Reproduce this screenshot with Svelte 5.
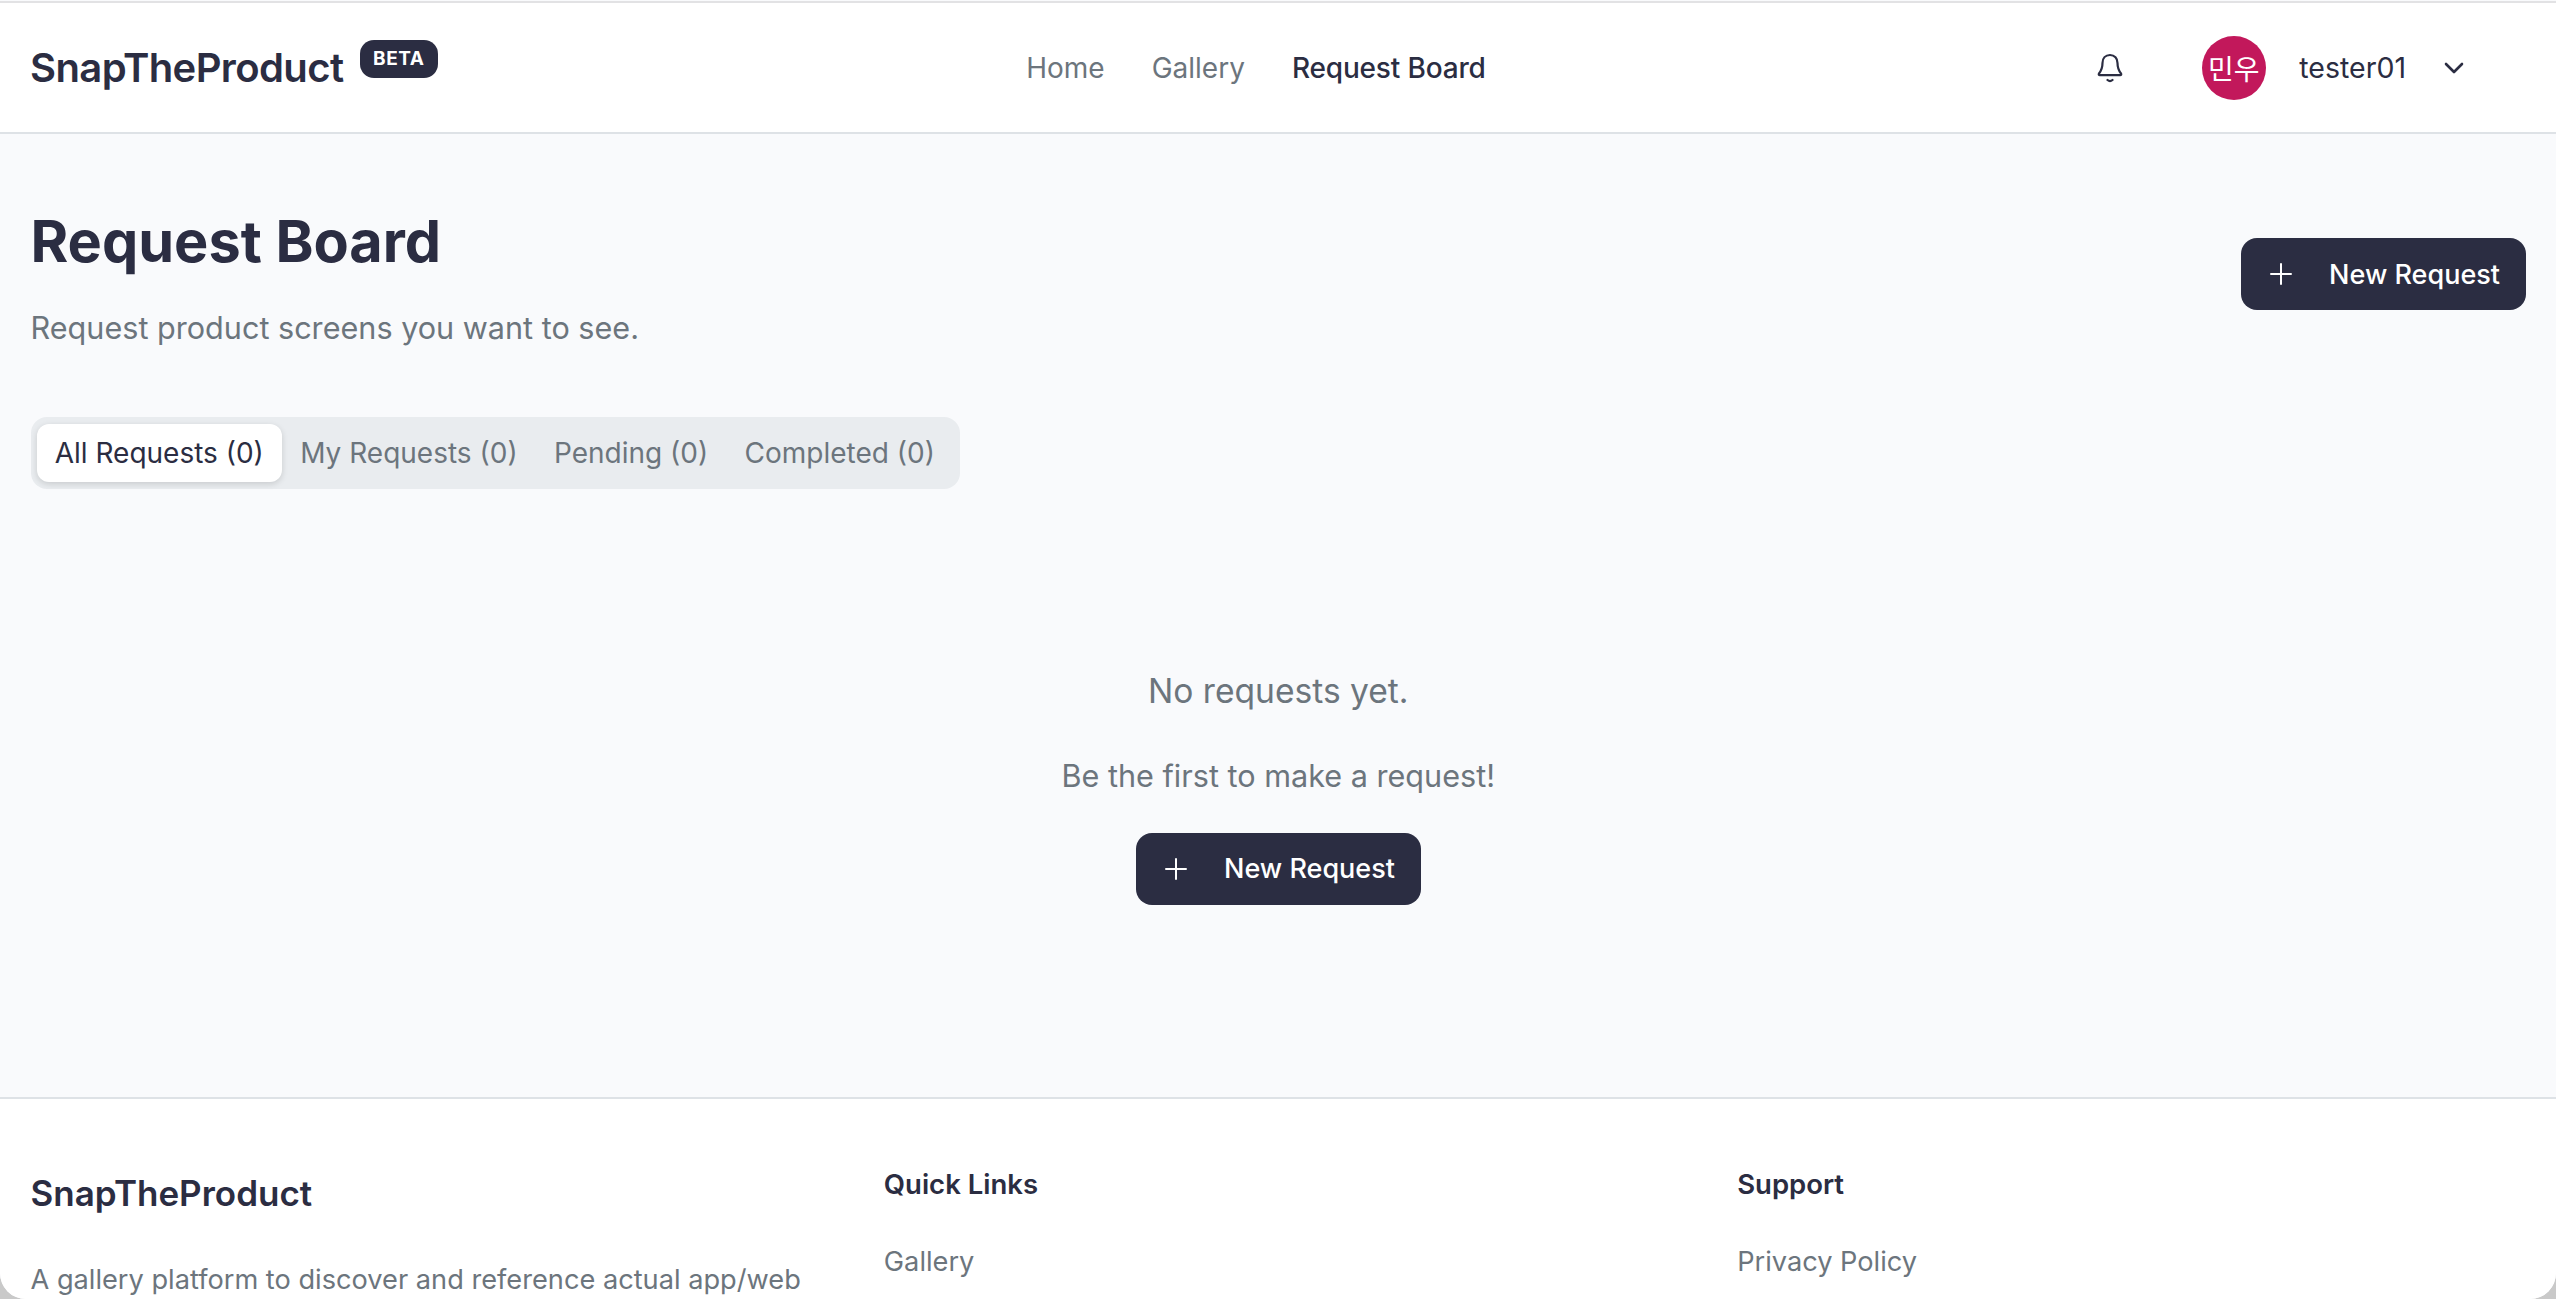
<script>
  const tabs = [
    { label: 'All Requests', count: 0 },
    { label: 'My Requests', count: 0 },
    { label: 'Pending', count: 0 },
    { label: 'Completed', count: 0 }
  ];
  const links = ['Home', 'Gallery', 'Request Board'];
  let active = $state('All Requests');
</script>

{#snippet newRequest()}
  <button type="button" class="btn">
    <svg class="plus" viewBox="0 0 22 22" width="22" height="22" aria-hidden="true">
      <path d="M11 1v20M1 11h20" fill="none" stroke="currentColor" stroke-width="2" stroke-linecap="round" />
    </svg>
    <span>New Request</span>
  </button>
{/snippet}

<div class="win">
  <header class="nav">
    <div class="brand">
      <span class="logo">SnapTheProduct</span>
      <span class="beta">BETA</span>
    </div>
    <nav class="links">
      {#each links as l}
        <a href="#top" class:on={l === 'Request Board'}>{l}</a>
      {/each}
    </nav>
    <div class="user">
      <svg class="bell" viewBox="0 0 28 30" width="28" height="30" aria-hidden="true">
        <path d="M14 2c-4.600 0-7.500 3.400-7.500 8 0 5.500-1.500 8-3.500 10.500-.6.8-.1 1.700.8 1.700h20.400c.9 0 1.400-.9.8-1.700-2-2.500-3.500-5-3.500-10.500 0-4.600-2.900-8-7.500-8z" fill="none" stroke="currentColor" stroke-width="2.200" stroke-linejoin="round" />
        <path d="M11.500 27c1.500 1.300 3.500 1.300 5 0" fill="none" stroke="currentColor" stroke-width="2.200" stroke-linecap="round" />
      </svg>
      <span class="avatar">민우</span>
      <span class="name">tester01</span>
      <svg class="chev" viewBox="0 0 20 12" width="20" height="12" aria-hidden="true">
        <path d="M2 2l8 8 8-8" fill="none" stroke="currentColor" stroke-width="2.600" stroke-linecap="round" stroke-linejoin="round" />
      </svg>
    </div>
  </header>

  <main class="main">
    <div class="head">
      <div>
        <h1>Request Board</h1>
        <p class="sub">Request product screens you want to see.</p>
      </div>
      {@render newRequest()}
    </div>

    <div class="tabs" role="tablist">
      {#each tabs as t}
        <button
          type="button"
          role="tab"
          class="tab"
          class:active={active === t.label}
          aria-selected={active === t.label}
          onclick={() => active = t.label}
        >{t.label} ({t.count})</button>
      {/each}
    </div>

    <section class="empty">
      <p class="e1">No requests yet.</p>
      <p class="e2">Be the first to make a request!</p>
      {@render newRequest()}
    </section>
  </main>

  <footer class="foot">
    <div class="col">
      <h2>SnapTheProduct</h2>
      <p class="about">A gallery platform to discover and reference actual app/web</p>
    </div>
    <div class="col">
      <h3>Quick Links</h3>
      <a href="#top">Gallery</a>
    </div>
    <div class="col">
      <h3>Support</h3>
      <a href="#top">Privacy Policy</a>
    </div>
  </footer>
</div>

<style>
  :global(body) {
    background: #c9c9c9;
    overflow: hidden;
  }
  .win {
    height: 1299px;
    overflow: hidden;
    display: flex;
    flex-direction: column;
    box-sizing: border-box;
    border-radius: 0 0 26px 26px;
    background: #f9fafc;
    color: #2b2d42;
    font-family: Inter, "Noto Sans CJK KR", sans-serif;
  }
  .nav {
    box-sizing: border-box;
    height: 133px;
    margin-top: 1px;
    flex: none;
    display: flex;
    justify-content: space-between;
    align-items: center;
    padding: 0 31px 0 30px;
    background: #fff;
    border-top: 2px solid #e2e2e4;
    border-bottom: 2px solid #dee2e6;
  }
  .brand { display: flex; align-items: flex-start; gap: 16.500px; }
  .logo { font-size: 40px; font-weight: 600; letter-spacing: -0.015em; line-height: 46px; }
  .beta {
    background: #2b2d42;
    color: #fff;
    font-size: 19px;
    font-weight: 700;
    letter-spacing: 0.03em;
    line-height: 38px;
    padding: 0 13px;
    border-radius: 14px;
    margin-top: -5px;
  }
  .links { display: flex; gap: 47px; font-size: 28px; }
  .links a { color: #6c757d; text-decoration: none; }
  .links a.on { color: #2b2d42; font-weight: 500; letter-spacing: -0.006em; }
  .user {
    display: flex;
    align-items: center;
    justify-content: flex-end;
    padding: 0 61px 0 21.500px;
  }
  .bell { margin-right: 78px; }
  .avatar {
    width: 64px;
    height: 64px;
    border-radius: 50%;
    background: #c2185b;
    color: #fff;
    font-size: 28px;
    display: flex;
    align-items: center;
    justify-content: center;
    margin-right: 33.500px;
  }
  .name { font-size: 28.500px; margin-right: 38px; }

  .main { flex: 1; padding: 0 30px 0 30.500px; }
  .head {
    display: flex;
    justify-content: space-between;
    align-items: flex-start;
    padding-top: 72.500px;
  }
  h1 { margin: 0; font-size: 57.600px; font-weight: 700; line-height: 68px; }
  .sub { margin: 33px 0 0; font-size: 30.600px; line-height: 40px; color: #6c757d; }
  .btn {
    display: inline-flex;
    align-items: center;
    height: 72px;
    padding: 0 26px 0 29.500px;
    border: 0;
    border-radius: 16px;
    background: #2b2d42;
    color: #fff;
    font-family: inherit;
    font-size: 27px;
    font-weight: 500;
    cursor: pointer;
  }
  .plus { margin-right: 37px; }
  .head .btn { margin-top: 31.500px; }
  .tabs {
    display: inline-flex;
    margin-top: 69px;
    padding: 7px 7px 7px 6px;
    border-radius: 16px;
    background: #e9ecef;
  }
  .tab {
    height: 58px;
    padding: 0 18.200px;
    border: 0;
    border-radius: 12px;
    background: transparent;
    color: #6c757d;
    font-family: inherit;
    font-size: 28px;
    cursor: pointer;
  }
  .tab.active {
    background: #fff;
    color: #2b2d42;
    box-shadow: 0 2px 6px rgba(0, 0, 0, 0.14);
  }
  .empty { text-align: center; padding-top: 181px; }
  .e1 { margin: 0; font-size: 33.600px; line-height: 42px; color: #6c757d; }
  .e2 { margin: 44px 0 0; font-size: 30.600px; line-height: 40px; color: #6c757d; }
  .empty .btn { margin-top: 37px; }

  .foot {
    flex: none;
    box-sizing: border-box;
    height: 202px;
    display: grid;
    grid-template-columns: repeat(3, 1fr);
    gap: 65.500px;
    padding: 68px 31px 0 30.500px;
    background: #fff;
    border-top: 2px solid #dee2e6;
  }
  .foot h2 { margin: 4px 0 0; font-size: 35px; font-weight: 600; line-height: 44px; }
  .about { margin: 44.500px 0 0; font-size: 27.200px; line-height: 40px; color: #6c757d; }
  .foot h3 { margin: 0; font-size: 27.500px; font-weight: 600; line-height: 34px; }
  .foot a { display: block; margin-top: 44px; font-size: 27.200px; color: #6c757d; text-decoration: none; }
</style>
